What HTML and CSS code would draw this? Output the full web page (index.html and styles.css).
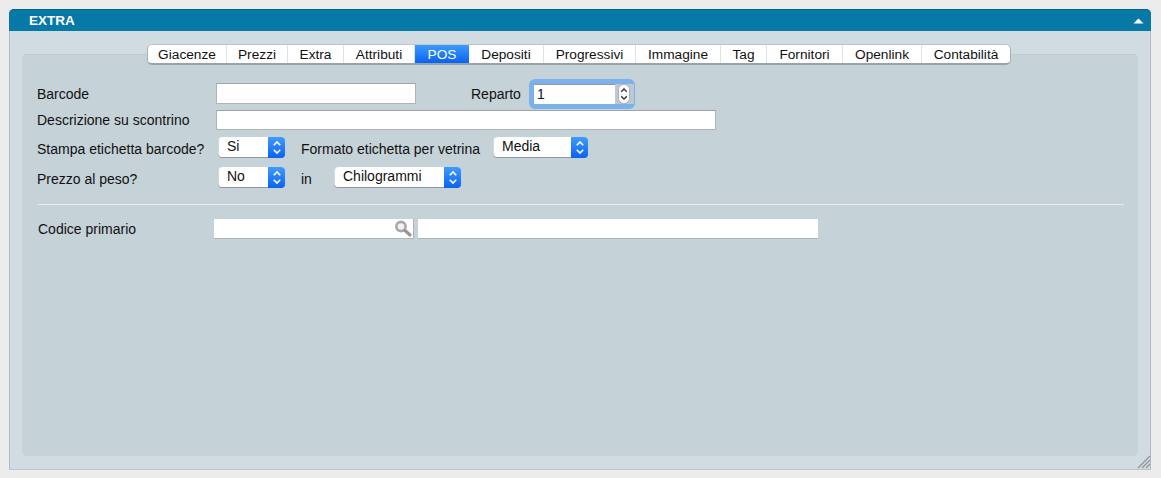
FILE: index.html
```html
<!DOCTYPE html>
<html lang="it">
<head>
<meta charset="utf-8">
<title>Extra</title>
<link rel="stylesheet" href="styles.css">
</head>
<body>
<section class="window">
  <header class="titlebar">
    <span class="title">EXTRA</span>
    <svg class="collapse" width="11" height="6" viewBox="0 0 11 6"><path d="M5.5 0.5 L10.5 5.5 L0.5 5.5 Z" fill="#fff"/></svg>
  </header>
  <div class="content">
    <div class="panel">
      <nav class="tabs">
        <span class="tab t1">Giacenze</span>
        <span class="tab t2">Prezzi</span>
        <span class="tab t3">Extra</span>
        <span class="tab t4">Attributi</span>
        <span class="tab t5 active">POS</span>
        <span class="tab t6">Depositi</span>
        <span class="tab t7">Progressivi</span>
        <span class="tab t8">Immagine</span>
        <span class="tab t9">Tag</span>
        <span class="tab t10">Fornitori</span>
        <span class="tab t11">Openlink</span>
        <span class="tab t12">Contabilità</span>
      </nav>
      <div class="form">
        <div class="row row-barcode">
          <label class="lbl">Barcode</label>
          <div class="field w200"></div>
          <label class="lbl-reparto">Reparto</label>
          <div class="focus-ring">
            <div class="field-num">1</div>
            <div class="stepper">
              <svg width="12" height="20" viewBox="0 0 12 20"><rect x="0.5" y="0.5" width="11" height="19" rx="5" fill="#fff" stroke="#a9aeb2"/><path d="M3.2 7.8 L6 5 L8.8 7.8 M3.2 12.2 L6 15 L8.8 12.2" fill="none" stroke="#333" stroke-width="1.3"/></svg>
            </div>
          </div>
        </div>
        <div class="row row-desc">
          <label class="lbl">Descrizione su scontrino</label>
          <div class="field w500"></div>
        </div>
        <div class="row row-stampa">
          <label class="lbl lbl-sel">Stampa etichetta barcode?</label>
          <div class="select s67"><span class="val">Si</span><span class="arrows"><svg width="16" height="21" viewBox="0 0 16 21"><path d="M4.8 8.2 L8 5 L11.2 8.2 M4.8 12.8 L8 16 L11.2 12.8" fill="none" stroke="#fff" stroke-width="1.6"/></svg></span></div>
          <label class="lbl-formato">Formato etichetta per vetrina</label>
          <div class="select s95"><span class="val">Media</span><span class="arrows"><svg width="16" height="21" viewBox="0 0 16 21"><path d="M4.8 8.2 L8 5 L11.2 8.2 M4.8 12.8 L8 16 L11.2 12.8" fill="none" stroke="#fff" stroke-width="1.6"/></svg></span></div>
        </div>
        <div class="row row-peso">
          <label class="lbl lbl-sel">Prezzo al peso?</label>
          <div class="select s67"><span class="val">No</span><span class="arrows"><svg width="16" height="21" viewBox="0 0 16 21"><path d="M4.8 8.2 L8 5 L11.2 8.2 M4.8 12.8 L8 16 L11.2 12.8" fill="none" stroke="#fff" stroke-width="1.6"/></svg></span></div>
          <label class="lbl-in">in</label>
          <div class="select s127"><span class="val">Chilogrammi</span><span class="arrows"><svg width="16" height="21" viewBox="0 0 16 21"><path d="M4.8 8.2 L8 5 L11.2 8.2 M4.8 12.8 L8 16 L11.2 12.8" fill="none" stroke="#fff" stroke-width="1.6"/></svg></span></div>
        </div>
        <hr class="divider">
        <div class="row row-codice">
          <label class="lbl-codice">Codice primario</label>
          <div class="field-flat w200 search">
            <svg width="19" height="17" viewBox="0 0 19 17"><circle cx="7" cy="6.5" r="4.6" fill="#f1f2f3" stroke="#a8a8a8" stroke-width="2.6"/><path d="M11 10.5 L16 15" stroke="#979797" stroke-width="3.2" stroke-linecap="round"/></svg>
          </div>
          <div class="field-flat w400"></div>
        </div>
      </div>
    </div>
    <div class="grip">
      <svg width="14" height="14" viewBox="0 0 14 14"><path d="M1 13 L13 1 M5 13 L13 5 M9 13 L13 9" stroke="#8f979c" stroke-width="1.3" fill="none"/></svg>
    </div>
  </div>
</section>
</body>
</html>
```
FILE: styles.css
```css
* { box-sizing: border-box; }
html, body { margin: 0; padding: 0; }
body {
  width: 1161px;
  height: 478px;
  overflow: hidden;
  background: #ececec;
  padding: 9px 10px 0 9px;
  font-family: "Liberation Sans", Arial, sans-serif;
  font-size: 14px;
  color: #111;
}
.window {
  width: 1142px;
  height: 460px;
  border-radius: 5px 5px 0 0;
  display: flex;
  flex-direction: column;
  background: #d0dce2;
  box-shadow: inset 1px 0 0 #b4babe, inset -1px 0 0 #b4babe, 0 1px 0 #c0c5c8;
}
.titlebar {
  height: 22px;
  flex: none;
  background: #0679a6;
  border-top: 1px solid #05648b;
  border-radius: 5px 5px 0 0;
  display: flex;
  align-items: center;
  justify-content: space-between;
  padding: 0 7px 0 20px;
  color: #fff;
}
.title { font-weight: bold; font-size: 13.5px; }
.collapse { margin-top: 1px; }
.content {
  flex: 1;
  padding: 23px 13px 13px 13px;
  display: flex;
  flex-direction: column;
}
.panel {
  flex: 1;
  background: #c5d2d8;
  border-radius: 5px;
  border-top: 1px solid #bccad0;
  padding: 0 14px 0 0;
}
.tabs {
  display: flex;
  width: 864px;
  height: 21px;
  margin: -11px 0 0 125px;
  background: #fff;
  border-radius: 5px;
  border: 1px solid #a9b1b5;
  border-top-color: #bfc6ca;
  border-bottom: 2px solid #9aa3a8;
  overflow: hidden;
  font-size: 13.7px;
}
.tab {
  display: flex;
  align-items: center;
  justify-content: center;
  border-right: 1px solid #dfe2e4;
  color: #111;
}
.t1 { width: 79px; } .t2 { width: 61px; } .t3 { width: 56px; }
.t4 { width: 71px; } .t5 { width: 54px; } .t6 { width: 75px; }
.t7 { width: 92px; } .t8 { width: 85px; } .t9 { width: 46px; }
.t10 { width: 76px; } .t11 { width: 79px; } .t12 { flex: 1; border-right: 0; }
.tab.active {
  background: linear-gradient(#3d9bfc, #0a62f0);
  color: #fff;
  border-right: 0;
}
.form { padding-left: 15px; }
.row { display: flex; align-items: center; }
.row-barcode { height: 21px; margin-top: 18px; align-items: flex-start; }
.row-barcode .lbl, .row-barcode .lbl-reparto { line-height: 23px; }
.row-desc { height: 20px; margin-top: 6px; }
.row-stampa { height: 21px; margin-top: 7px; }
.row-peso { height: 21px; margin-top: 9px; }
.lbl { width: 179px; flex: none; }
.lbl-sel { width: 181px; padding-top: 2px; }
.field {
  height: 21px;
  background: #fff;
  border: 1px solid #aeb4b7;
  border-top-color: #9da3a6;
}
.row-desc .field { height: 20px; }
.w200 { width: 200px; flex: none; }
.w500 { width: 500px; flex: none; }
.w400 { width: 400px; flex: none; }
.lbl-reparto { margin-left: 55px; width: 58px; flex: none; }
.focus-ring {
  width: 106px;
  height: 30px;
  margin-top: -4px;
  background: #7cb2eb;
  border-radius: 6px;
  display: flex;
  align-items: center;
  padding-left: 5px;
  flex: none;
}
.field-num {
  width: 81px;
  height: 20px;
  background: #fff;
  border-top: 1px solid #999;
  line-height: 19px;
  padding-left: 3px;
}
.stepper {
  width: 19px;
  height: 20px;
  display: flex;
  justify-content: flex-start;
  align-items: center;
  padding-left: 3px;
  background: #bcc9d0;
}
.select {
  height: 21px;
  background: #fff;
  border-radius: 4px;
  box-shadow: inset 0 -1px 0 #8f989d, inset 1px 0 0 #d3d8da, inset -1px 0 0 #d3d8da;
  display: flex;
  justify-content: space-between;
  overflow: hidden;
  flex: none;
}
.val { padding-left: 9px; line-height: 19px; }
.arrows {
  width: 17px;
  height: 21px;
  background: linear-gradient(#3f9cfd, #0a63f1);
  display: flex;
  align-items: center;
  justify-content: center;
}
.s67 { width: 67px; }
.s95 { width: 95px; }
.s127 { width: 127px; }
.lbl-formato { margin-left: 16px; width: 192px; flex: none; padding-top: 2px; }
.lbl-in { margin-left: 16px; width: 33px; flex: none; padding-top: 2px; }
.divider {
  height: 1px;
  border: 0;
  background: #e6ecef;
  margin: 16px 0 0 1px;
  width: 1086px;
}
.row-codice { height: 20px; margin-top: 14px; margin-left: 1px; }
.lbl-codice { width: 176px; flex: none; }
.field-flat {
  height: 20px;
  background: #fff;
  border-bottom: 1px solid #aeb4b7;
}
.search {
  display: flex;
  justify-content: flex-end;
  align-items: center;
  margin-right: 4px;
  border-right: 1px solid #aeb4b7;
}
.grip {
  align-self: flex-end;
  width: 14px;
  height: 14px;
  margin: -1px -13px -13px 0;
}
```
